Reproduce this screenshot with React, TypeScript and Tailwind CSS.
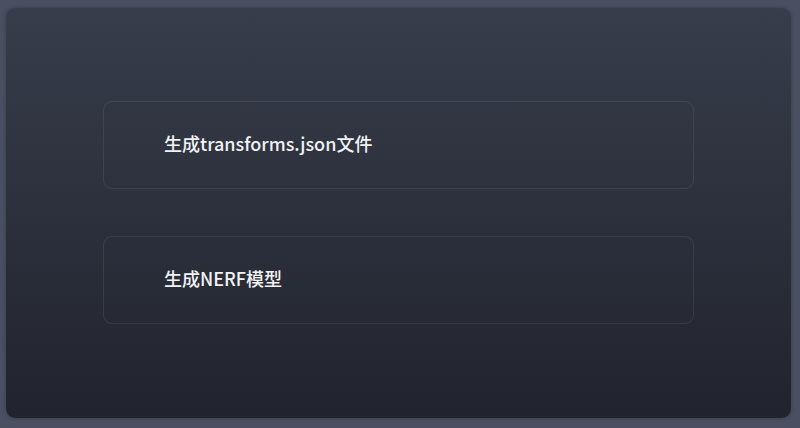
export default function App() {
  const items = ["生成transforms.json文件", "生成NERF模型"];
  return (
    <div className="w-[800px] h-[428px] bg-[#4a5061] pt-[8px] pl-[6px] pr-[9px] pb-[10px]" style={{ fontFamily: '"Noto Sans CJK SC", "Noto Sans", sans-serif' }}>
      <div className="h-full w-full rounded-[9px] bg-gradient-to-b from-[#383d4b] to-[#21242e] shadow-[0_0_4px_rgba(0,0,0,0.25)] flex flex-col items-center pt-[93px] gap-[47px]">
        {items.map((t) => (
          <div key={t} className="w-[591px] h-[88px] rounded-[9px] border border-[#ffffff14] flex items-center pl-[60px] pb-[5px]">
            <span className="text-[18px] leading-[26px] font-medium text-[#f1f2f4]">{t}</span>
          </div>
        ))}
      </div>
    </div>
  );
}
